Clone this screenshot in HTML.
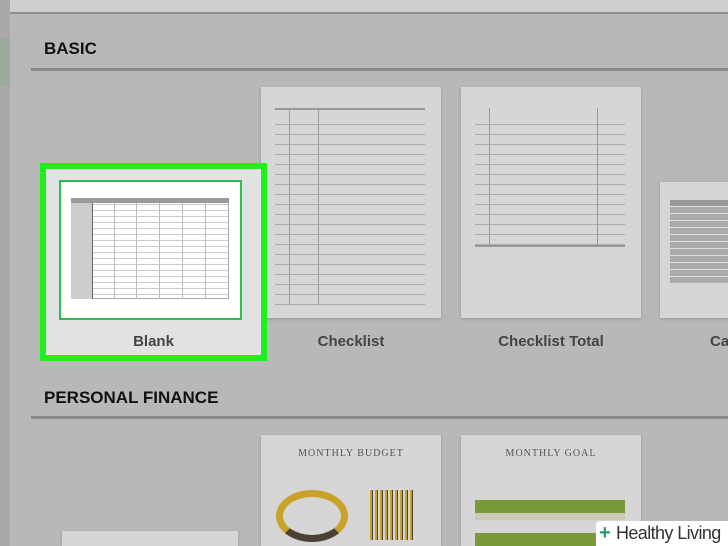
<!DOCTYPE html><html><head><style>
*{margin:0;padding:0;box-sizing:border-box}
html,body{width:728px;height:546px;overflow:hidden}
body{background:#b8b8b8;font-family:"Liberation Sans",sans-serif;position:relative}
.a{position:absolute}
.h{font-weight:bold;font-size:17px;color:#111}
.line{height:3px;background:#8a8a8a;left:31px;right:0}
.pg{background:#d6d6d6;box-shadow:0 1px 3px rgba(0,0,0,.2)}
.lbl{font-weight:bold;font-size:15px;color:#444;text-align:center}
.rows{background:repeating-linear-gradient(#d6d6d6 0 9px,#aaa 9px 10px)}
</style></head><body>
<div class="a" style="left:0;top:0;width:10px;height:546px;background:#a9a9a9"></div>
<div class="a" style="left:0;top:38px;width:10px;height:48px;background:#9aaa9c"></div>
<div class="a" style="left:10px;top:0;right:0;height:14px;background:#cfcfcf;border-bottom:2px solid #8d8d8d"></div>
<div class="a h" style="left:44px;top:39px">BASIC</div>
<div class="a line" style="top:68px"></div>

<div class="a pg" style="left:261px;top:87px;width:180px;height:231px"></div>
<div class="a" style="left:275px;top:108px;width:150px;height:200px;border-top:2px solid #999" ></div>
<div class="a rows" style="left:275px;top:115px;width:150px;height:190px"></div>
<div class="a" style="left:289px;top:108px;width:1px;height:197px;background:#999;box-shadow:29px 0 #999"></div>
<div class="a pg" style="left:461px;top:87px;width:180px;height:231px"></div>
<div class="a rows" style="left:475px;top:115px;width:150px;height:130px"></div>
<div class="a" style="left:489px;top:108px;width:1px;height:137px;background:#999;box-shadow:108px 0 #999"></div>
<div class="a" style="left:475px;top:245px;width:150px;height:2px;background:#999"></div>
<div class="a pg" style="left:660px;top:182px;width:80px;height:136px"></div>
<div class="a" style="left:670px;top:200px;width:70px;height:83px;background:repeating-linear-gradient(#aaa 0 6px,#ddd 6px 7px)"></div>
<div class="a" style="left:670px;top:200px;width:70px;height:6px;background:#999"></div>

<div class="a" style="left:40px;top:163px;width:227px;height:198px;border:6px solid #1ef01e;background:#e2e2e2"></div>
<div class="a" style="left:59px;top:180px;width:183px;height:140px;background:#fff;border:2px solid #2cc050"></div>
<div class="a" style="left:71px;top:198px;width:158px;height:101px;background:repeating-linear-gradient(#fff 0 5px,#ccc 5px 6px);border:1px solid #aaa"></div>
<div class="a" style="left:71px;top:198px;width:158px;height:5px;background:#999"></div>
<div class="a" style="left:71px;top:203px;width:22px;height:96px;background:#ccc;border-right:1px solid #666"></div>
<div class="a" style="left:114px;top:203px;width:1px;height:96px;background:#bbb;box-shadow:22px 0 #bbb,45px 0 #bbb,68px 0 #bbb,91px 0 #bbb"></div>
<div class="a lbl" style="left:40px;top:333px;width:227px">Blank</div>
<div class="a lbl" style="left:261px;top:333px;width:180px">Checklist</div>
<div class="a lbl" style="left:461px;top:333px;width:180px">Checklist Total</div>
<div class="a lbl" style="left:710px;top:333px">Ca</div>

<div class="a h" style="left:44px;top:388px">PERSONAL FINANCE</div>
<div class="a line" style="top:416px"></div>
<div class="a pg" style="left:261px;top:435px;width:180px;height:111px"></div>
<div class="a" style="left:261px;top:448px;width:180px;text-align:center;font-family:'Liberation Serif',serif;font-size:10px;letter-spacing:1px;color:#555">MONTHLY BUDGET</div>
<div class="a" style="left:276px;top:490px;width:72px;height:52px;border-radius:50%;border:7px solid #c9a22a;border-bottom-color:#4a4236"></div>
<div class="a" style="left:370px;top:490px;width:45px;height:50px;background:repeating-linear-gradient(90deg,#c9a22a 0 2px,#4a4236 2px 3px,transparent 3px 5px)"></div>
<div class="a pg" style="left:461px;top:435px;width:180px;height:111px"></div>
<div class="a" style="left:461px;top:448px;width:180px;text-align:center;font-family:'Liberation Serif',serif;font-size:10px;letter-spacing:1px;color:#555">MONTHLY GOAL</div>
<div class="a" style="left:475px;top:500px;width:150px;height:13px;background:#7a9a3a"></div>
<div class="a" style="left:475px;top:513px;width:150px;height:7px;background:#ccc8b8"></div>
<div class="a" style="left:475px;top:533px;width:150px;height:13px;background:#7a9a3a"></div>
<div class="a pg" style="left:62px;top:531px;width:176px;height:15px"></div>
<div class="a" style="left:596px;top:521px;width:132px;height:25px;background:#fff;border-radius:4px 0 0 0;font-size:18px;line-height:24px;color:#333;padding-left:20px;letter-spacing:-.6px;white-space:nowrap;overflow:hidden"><span class="a" style="left:3px;top:0;color:#2a9a6a;font-weight:bold;font-size:20px">+</span>Healthy Living</div>
</body></html>
